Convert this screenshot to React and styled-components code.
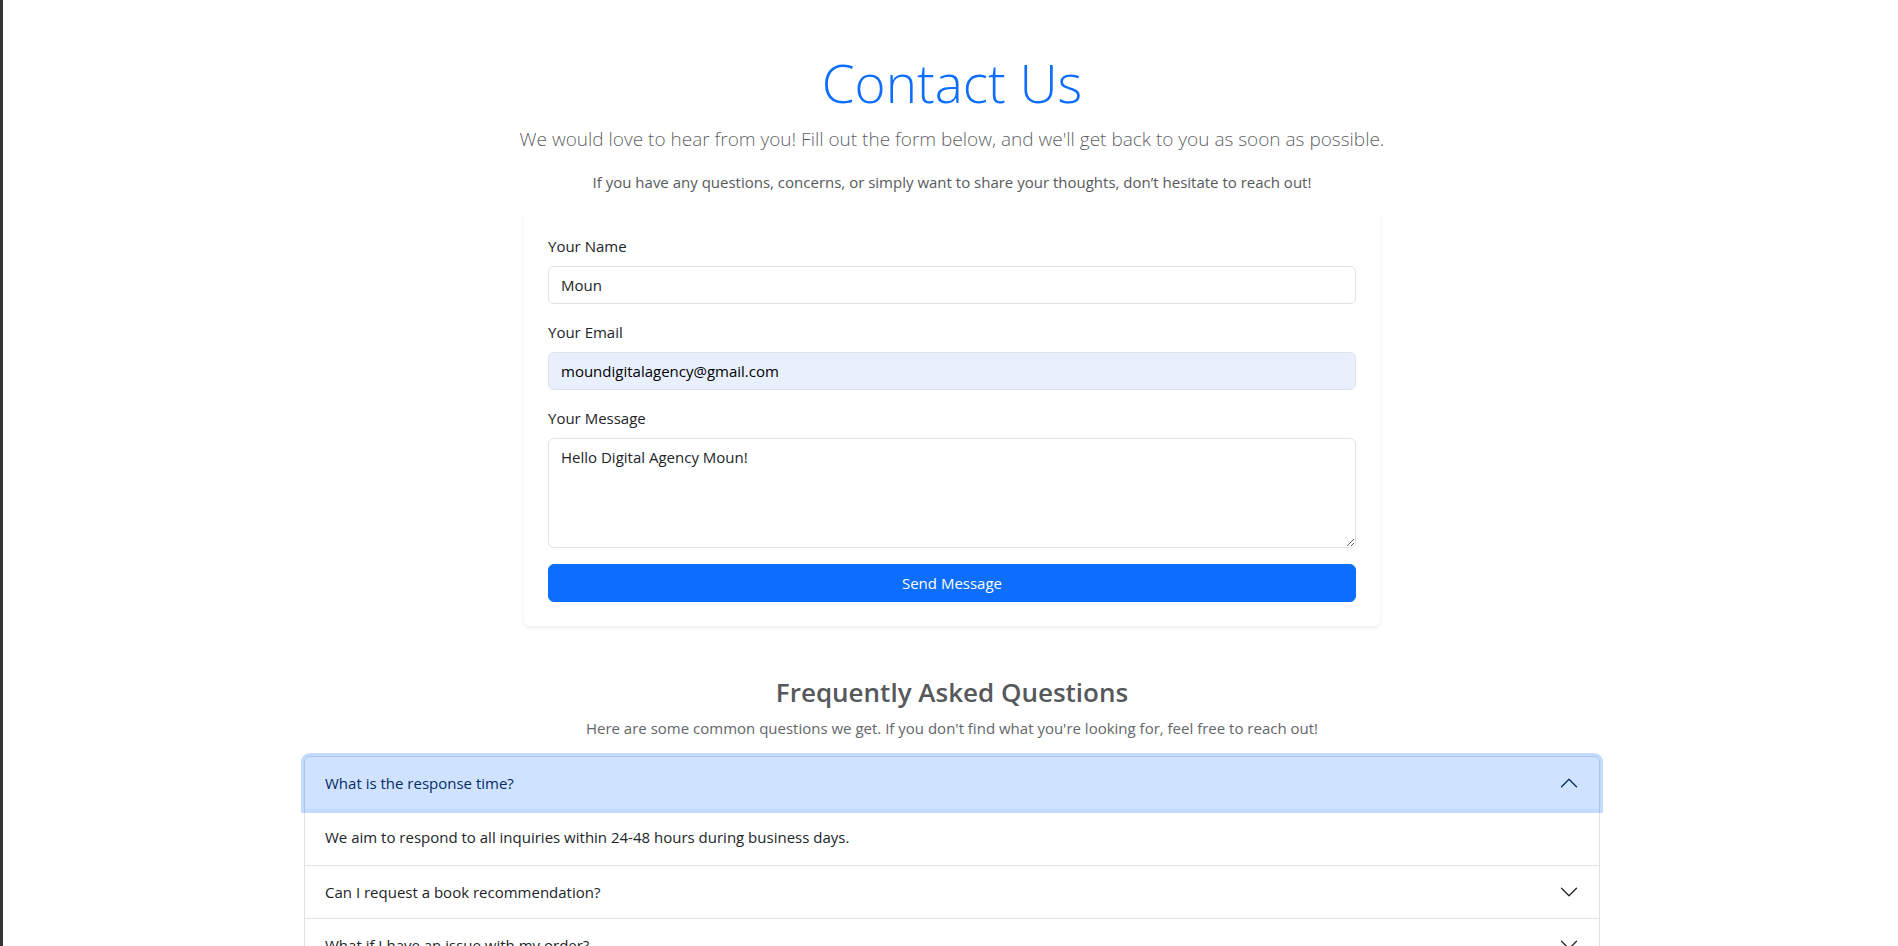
import React, { useState } from "react";
import styled, { createGlobalStyle, css } from "styled-components";

const GlobalStyle = createGlobalStyle`
  *, *::before, *::after { box-sizing: border-box; }
  html { scrollbar-width: none; }
  body {
    margin: 0;
    background: #fff;
    color: #212529;
    font-family: "Segoe UI", "Open Sans", "Noto Sans", sans-serif;
    font-size: 15px;
    line-height: 24px;
  }
  h1, h2, h3, p { margin: 0; }
  button, input, textarea { font: inherit; color: inherit; }
`;

const Page = styled.main`
  min-height: 100vh;
  padding: 48px 0 48px 3px;
  border-left: 3px solid #353535;
`;

const Container = styled.div`
  width: 100%;
  max-width: 1320px;
  margin: 0 auto;
  padding: 0 12px;
`;

const ContactSection = styled.section`
  display: flex;
  flex-direction: column;
  align-items: center;
  gap: 16px;
`;

const Intro = styled.header`
  display: flex;
  flex-direction: column;
  gap: 6px;
  text-align: center;
`;

const Title = styled.h1`
  color: #0d6efd;
  font-size: 53px;
  font-weight: 300;
  line-height: 70px;
`;

const Lead = styled.p`
  color: rgba(33, 37, 41, 0.75);
  font-size: 19px;
  font-weight: 300;
  line-height: 30px;
`;

const Note = styled.p`
  color: ${(p) => (p.$soft ? "#636669" : "#56595c")};
  text-align: center;
`;

const Card = styled.form`
  display: flex;
  flex-direction: column;
  gap: 16px;
  width: 100%;
  max-width: 856px;
  padding: 24px;
  border-radius: 6px;
  background: #fff;
  box-shadow: 0 2px 4px rgba(0, 0, 0, 0.075);
`;

const Field = styled.div`
  display: flex;
  flex-direction: column;
  gap: 8px;
`;

const controlStyle = css`
  display: block;
  width: 100%;
  padding: 6px 12px;
  border: 1px solid #dee2e6;
  border-radius: 6px;
  outline: none;
  background: #fff;
  line-height: 24px;
  &:focus {
    border-color: #86b7fe;
    box-shadow: 0 0 0 4px rgba(13, 110, 253, 0.25);
  }
`;

const TextInput = styled.input`
  ${controlStyle}
  height: 38px;
  ${(p) => p.$filled && "background: #e8f0fe; color: #000;"}
`;

const TextArea = styled.textarea`
  ${controlStyle}
  resize: vertical;
`;

const SubmitButton = styled.button`
  padding: 6px 12px;
  border: 1px solid #0d6efd;
  border-radius: 6px;
  background: #0d6efd;
  color: #fff;
  cursor: pointer;
`;

const FaqSection = styled.section`
  display: flex;
  flex-direction: column;
  gap: 16px;
  margin-top: 48px;
`;

const FaqTitle = styled.h2`
  color: #56595c;
  font-size: 26px;
  font-weight: 600;
  line-height: 36px;
`;

const Accordion = styled.div`
  border: 1px solid #dee2e6;
  border-radius: 6px;
`;

const Item = styled.div`
  & + & { border-top: 1px solid #dee2e6; }
`;

const ItemHeading = styled.h3`
  font-size: 15px;
  font-weight: 400;
  line-height: 20px;
`;

const ItemButton = styled.button`
  display: flex;
  align-items: center;
  justify-content: space-between;
  width: 100%;
  padding: 16px 20px;
  border: 0;
  border-radius: ${(p) => (p.$first ? "5px 5px 0 0" : "0")};
  outline: none;
  background: transparent;
  text-align: left;
  cursor: pointer;
  ${(p) =>
    p.$open &&
    css`
      background: #cfe2ff;
      color: #052c65;
      box-shadow: 0 0 0 4px rgba(13, 110, 253, 0.25);
    `}
`;

const ItemBody = styled.div`
  padding: 16px 20px;
`;

const ChevronIcon = styled.svg`
  flex: none;
  width: 20px;
  height: 20px;
  transform: ${(p) => (p.$open ? "rotate(180deg)" : "none")};
`;

function Chevron({ open }) {
  return (
    <ChevronIcon $open={open} viewBox="0 0 16 16" fill="none" stroke="currentColor" strokeLinecap="round" strokeLinejoin="round" aria-hidden="true">
      <path d="M2 5L8 11L14 5" />
    </ChevronIcon>
  );
}

const faqs = [
  { question: "What is the response time?", answer: "We aim to respond to all inquiries within 24-48 hours during business days." },
  { question: "Can I request a book recommendation?" },
  { question: "What if I have an issue with my order?" },
];

export default function App() {
  const [openIndex, setOpenIndex] = useState(0);
  return (
    <>
      <GlobalStyle />
      <Page>
        <Container>
          <ContactSection>
            <Intro>
              <Title>Contact Us</Title>
              <Lead>We would love to hear from you! Fill out the form below, and we'll get back to you as soon as possible.</Lead>
            </Intro>
            <Note>If you have any questions, concerns, or simply want to share your thoughts, don’t hesitate to reach out!</Note>
            <Card onSubmit={(e) => e.preventDefault()}>
              <Field>
                <label htmlFor="name">Your Name</label>
                <TextInput id="name" type="text" defaultValue="Moun" />
              </Field>
              <Field>
                <label htmlFor="email">Your Email</label>
                <TextInput id="email" type="email" defaultValue="moundigitalagency@gmail.com" $filled />
              </Field>
              <Field>
                <label htmlFor="message">Your Message</label>
                <TextArea id="message" rows={4} defaultValue="Hello Digital Agency Moun!" />
              </Field>
              <SubmitButton type="submit">Send Message</SubmitButton>
            </Card>
          </ContactSection>
          <FaqSection>
            <Intro>
              <FaqTitle>Frequently Asked Questions</FaqTitle>
              <Note $soft>Here are some common questions we get. If you don't find what you're looking for, feel free to reach out!</Note>
            </Intro>
            <Accordion>
              {faqs.map((faq, i) => {
                const open = i === openIndex;
                return (
                  <Item key={faq.question}>
                    <ItemHeading>
                      <ItemButton type="button" $first={i === 0} $open={open} aria-expanded={open} onClick={() => setOpenIndex(open ? -1 : i)}>
                        {faq.question}
                        <Chevron open={open} />
                      </ItemButton>
                    </ItemHeading>
                    {open && faq.answer && <ItemBody>{faq.answer}</ItemBody>}
                  </Item>
                );
              })}
            </Accordion>
          </FaqSection>
        </Container>
      </Page>
    </>
  );
}
